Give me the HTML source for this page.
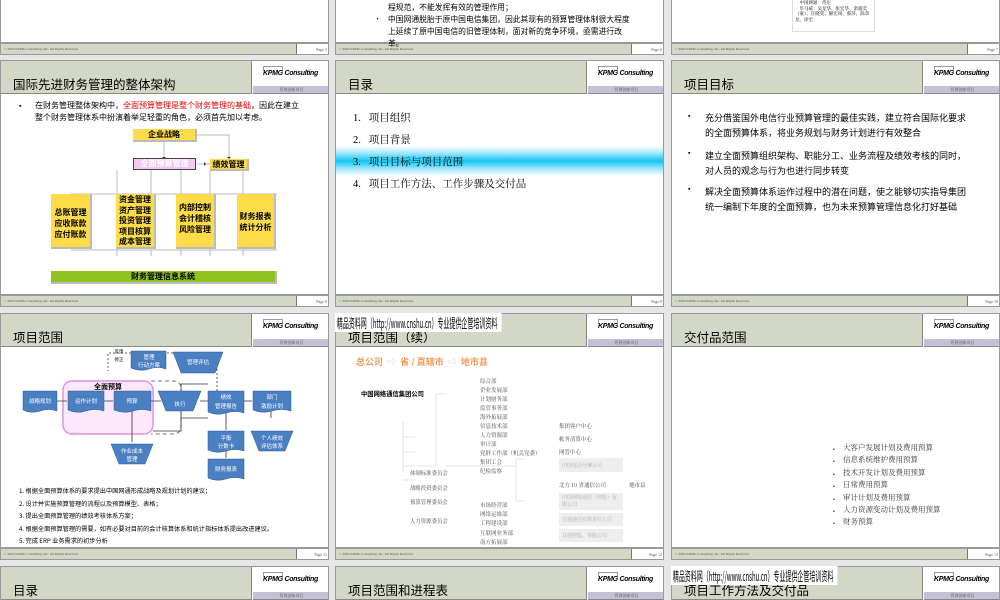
<!DOCTYPE html>
<html><head><meta charset="utf-8">
<style>
*{margin:0;padding:0;box-sizing:border-box}
html{width:1000px;height:600px;overflow:hidden}
body{width:1000px;height:600px;overflow:hidden;background:#e6e6e6;position:relative;font-family:"Liberation Sans","Noto Sans CJK SC",sans-serif;color:#000}
.a{position:absolute;white-space:nowrap}
.s{position:absolute;width:329px;height:247px;background:#fff;border:1px solid #999;overflow:hidden}
.r1{position:absolute;width:329px;height:55px;top:0;overflow:hidden}
.r1 .s{top:-192px;left:0}
.r4{position:absolute;width:329px;height:34px;top:566px;overflow:hidden}
.r4 .s{top:0;left:0;height:34px;border-bottom:none}
.hb{position:absolute;left:0;top:0;width:251px;height:33px;background:#d3d7c6;border-bottom:1px solid #888;border-right:1px solid #888}
.kp{position:absolute;left:252px;top:0;width:77px;height:25px;background:#fff}
.kp span{position:absolute;left:10px;top:9px;font:italic bold 7px "Liberation Sans",sans-serif;letter-spacing:-0.3px}
.kp i{position:absolute;left:10px;top:5px;width:20px;height:5px;border:1px solid #999;border-bottom:none}
.pu{position:absolute;left:252px;top:25px;width:77px;height:8px;background:#c4c1d6;border-bottom:1px solid #888;font:4px "Noto Serif CJK SC",serif;color:#555;text-align:center;line-height:8px}
.tt{position:absolute;left:12px;top:13px;font:12.5px "Noto Sans CJK SC",sans-serif}
.ft{position:absolute;left:0;top:233px;width:329px;height:13px;background:#d3d7c6;border-top:2px solid #999}
.ft span{position:absolute;left:3px;top:3px;font:3.5px "Liberation Serif",serif;color:#555}
.pg{position:absolute;right:0;top:0;width:34px;height:11px;background:#fff;border-left:1px solid #777;font:4px "Liberation Serif",serif;color:#555;text-align:right;padding:3px 3px 0 0}
.sr{font-family:"Liberation Serif","Noto Serif CJK SC",serif}
.yb{position:absolute;background:#fddb49;border-right:2px solid #bbb;border-bottom:2px solid #bbb;font:bold 8px "Noto Sans CJK SC",sans-serif;text-align:center}
.wm{position:absolute;background:#fff;font:13px "Noto Sans CJK SC",sans-serif;transform:scaleX(0.46);transform-origin:left top;white-space:nowrap;padding:0 4px;height:19px;line-height:19px;z-index:5;overflow:hidden}
.b9{position:absolute;left:33px;font:9px "Noto Sans CJK SC",sans-serif;white-space:nowrap}
.bl{position:absolute;left:16px;font:7px sans-serif}
</style></head><body>

<!-- ROW 1 (partial) -->
<div class="r1" style="left:0"><div class="s"><div class="ft"><span>© 2002 KPMG Consulting, Inc. All Rights Reserved</span><div class="pg">Page 5</div></div></div></div>
<div class="r1" style="left:335px"><div class="s">
<div class="a" style="left:52px;top:193px;font:7.8px 'Noto Sans CJK SC';">程规范，不能发挥有效的管理作用；</div>
<div class="a" style="left:38px;top:205px;font:7px 'Noto Sans CJK SC';">•</div>
<div class="a" style="left:52px;top:205px;font:7.8px 'Noto Sans CJK SC';">中国网通脱胎于原中国电信集团，因此其现有的预算管理体制很大程度</div>
<div class="a" style="left:52px;top:217px;font:7.8px 'Noto Sans CJK SC';">上延续了原中国电信的旧管理体制，面对新的竞争环境，亟需进行改</div>
<div class="a" style="left:52px;top:229px;font:7.8px 'Noto Sans CJK SC';z-index:2">革。</div>
<div class="ft"><span>© 2002 KPMG Consulting, Inc. All Rights Reserved</span><div class="pg">Page 6</div></div></div></div>
<div class="r1" style="left:671px"><div class="s">
<div class="a" style="left:120px;top:188px;width:83px;height:35px;border:1px solid #ddd;font:4.5px 'Noto Serif CJK SC';line-height:5.5px;padding:3px 2px;white-space:normal">•中国网通：待定<br>•毕马威：吴龙华、张宏华、余浦奕（豪）、汪晓雯、解宏岗、蔡萍、陈章龙、徐宏</div>
<div class="ft"><span>© 2002 KPMG Consulting, Inc. All Rights Reserved</span><div class="pg">Page 7</div></div></div></div>

<!-- ROW 2 -->
<div class="s" style="left:0;top:60px">
<div class="hb"></div><div class="tt">国际先进财务管理的整体架构</div>
<div class="kp"><i></i><span>KPMG Consulting</span></div><div class="pu">管理创新项目</div>
<div class="a" style="left:18px;top:42px;font:7px sans-serif">▪</div>
<div class="a" style="left:34px;top:39px;font:8px 'Noto Sans CJK SC';line-height:12px">在财务管理整体架构中，<span style="color:#e00">全面预算管理是整个财务管理的基础</span>，因此在建立<br>整个财务管理体系中扮演着举足轻重的角色，必须首先加以考虑。</div>
<svg class="a" style="left:0;top:0" width="329" height="233">
<g stroke="#bbb" fill="none" stroke-width="1">
<path d="M196 74H228V97M163 81V97M196 103H209M116 109V195M150 109V195M180 109V195M209 109V195M242 109V195M70 133H276M70 189H276"/>
</g>
<g fill="#333"><path d="M161 96h4l-2 2zM226 96h4l-2 2zM203 101v4l2-2z"/></g>
</svg>
<div class="yb" style="left:132px;top:68px;width:64px;height:13px;line-height:12px">企业战略</div>
<div class="a" style="left:132px;top:97px;width:63px;height:12px;background:#f3c8f3;border:1.5px solid #444;font:bold 8px 'Noto Sans CJK SC';color:#fff;text-align:center;line-height:9px">全面预算管理</div>
<div class="yb" style="left:209px;top:98px;width:39px;height:12px;line-height:11px">绩效管理</div>
<div class="yb" style="left:50px;top:133px;width:41px;height:55px;padding-top:13px;line-height:11px">总账管理<br>应收账款<br>应付账款</div>
<div class="yb" style="left:115px;top:133px;width:40px;height:55px;padding-top:1px;line-height:10.5px">资金管理<br>资产管理<br>投资管理<br>项目核算<br>成本管理</div>
<div class="yb" style="left:175px;top:133px;width:40px;height:55px;padding-top:8px;line-height:11px">内部控制<br>会计稽核<br>风险管理</div>
<div class="yb" style="left:236px;top:133px;width:39px;height:55px;padding-top:17px;line-height:11px">财务报表<br>统计分析</div>
<div class="a" style="left:50px;top:210px;width:226px;height:13px;background:#8fc31f;border-right:2px solid #bbb;border-bottom:2px solid #bbb;font:bold 8px 'Noto Sans CJK SC';text-align:center;line-height:12px">财务管理信息系统</div>
<div class="ft"><span>© 2002 KPMG Consulting, Inc. All Rights Reserved</span><div class="pg">Page 8</div></div></div>

<div class="s" style="left:335px;top:60px">
<div class="hb"></div><div class="tt">目录</div>
<div class="kp"><i></i><span>KPMG Consulting</span></div><div class="pu">管理创新项目</div>
<div class="a" style="left:0;top:85px;width:329px;height:30px;background:linear-gradient(#fff,#9ae6fa 25%,#12c6f2 50%,#9ae6fa 75%,#fff)"></div>
<div class="a sr" style="left:17px;top:47px;font-size:10.5px;line-height:22px">1.&nbsp;&nbsp; 项目组织<br>2.&nbsp;&nbsp; 项目背景<br>3.&nbsp;&nbsp; 项目目标与项目范围<br>4.&nbsp;&nbsp; 项目工作方法、工作步骤及交付品</div>
<div class="ft"><span>© 2002 KPMG Consulting, Inc. All Rights Reserved</span><div class="pg">Page 9</div></div></div>

<div class="s" style="left:671px;top:60px">
<div class="hb"></div><div class="tt">项目目标</div>
<div class="kp"><i></i><span>KPMG Consulting</span></div><div class="pu">管理创新项目</div>
<div class="bl" style="top:52px">▪</div><div class="bl" style="top:89px">▪</div><div class="bl" style="top:125px">▪</div>
<div class="b9" style="top:50px">充分借鉴国外电信行业预算管理的最佳实践，建立符合国际化要求</div>
<div class="b9" style="top:65px">的全面预算体系，将业务规划与财务计划进行有效整合</div>
<div class="b9" style="top:88px">建立全面预算组织架构、职能分工、业务流程及绩效考核的同时，</div>
<div class="b9" style="top:103px">对人员的观念与行为也进行同步转变</div>
<div class="b9" style="top:124px">解决全面预算体系运作过程中的潜在问题，使之能够切实指导集团</div>
<div class="b9" style="top:139px">统一编制下年度的全面预算，也为未来预算管理信息化打好基础</div>
<div class="ft"><span>© 2002 KPMG Consulting, Inc. All Rights Reserved</span><div class="pg">Page 10</div></div></div>

<!-- ROW 3 -->
<div class="s" style="left:0;top:313px">
<div class="hb"></div><div class="tt">项目范围</div>
<div class="kp"><i></i><span>KPMG Consulting</span></div><div class="pu">管理创新项目</div>
<svg class="a" style="left:0;top:0" width="329" height="233" font-family="Noto Sans CJK SC" font-size="5.5" text-anchor="middle">
<rect x="62" y="67" width="90" height="53" rx="9" fill="#fde8fb" stroke="#e48fe4" stroke-width="1.5"/>
<path d="M150 67H172q8 0 8 8v37q0 8-8 8H150" fill="none" stroke="#8a6a8a" stroke-dasharray="4 3"/>
<g stroke="#333" fill="none" stroke-width="0.8">
<path d="M55 87H66M103 87H112M150 87H160M199 87H207M243 87H251M270 97V104M131 97V128M152 117H180V70H207M180 104H207M225 95V116M225 122V144" />
<path d="M130 39H107V57M172 39H166M216 39V86" stroke-dasharray="2 2"/>
</g>
<g fill="#4a7fc1" stroke="#2d5a9a" stroke-width="0.5">
<path d="M22 77h34v20q-8-3-17 0t-17-1z"/>
<path d="M67 77h36v20q-9-3-18 0t-18-1z"/>
<path d="M113 77h37v20q-9-3-18 0t-19-1z"/>
<path d="M157 77h43l-8 20h-27z"/>
<path d="M207 77h36v22q-9-3-18 0t-18-1z"/>
<path d="M252 77h38v20q-9-3-19 0t-19-1z"/>
<path d="M130 37h35v18q-9-3-17 0t-18-1z"/>
<path d="M172 38h50l-8 21h-34z"/>
<path d="M110 130h42l-8 20h-26z"/>
<path d="M207 117h36v20q-9-3-18 0t-18-1z"/>
<path d="M207 145h36v20q-9-3-18 0t-18-1z"/>
<path d="M250 117h42l-8 20h-26z"/>
</g>
<g fill="#fff">
<text x="39" y="89">战略规划</text><text x="85" y="89">运作计划</text><text x="131" y="89">预算</text><text x="179" y="92">执行</text>
<text x="225" y="85">绩效</text><text x="225" y="94">管理报告</text><text x="271" y="85">部门</text><text x="271" y="94">激励计划</text>
<text x="148" y="45">管理</text><text x="148" y="53">行动方案</text><text x="197" y="50">管理评估</text>
<text x="131" y="139">作业成本</text><text x="131" y="147">管理</text>
<text x="225" y="126">平衡</text><text x="225" y="134">分数卡</text><text x="225" y="157">财务报表</text>
<text x="271" y="126">个人绩效</text><text x="271" y="134">评估体系</text>
</g>
<text x="107" y="75" font-size="7" font-weight="bold">全面预算</text>
<text x="118" y="39" font-size="4.5">反馈</text><text x="118" y="47" font-size="4.5">修正</text>
</svg>
<div class="a" style="left:18px;top:171px;font:6.2px 'Noto Sans CJK SC';line-height:12.6px">1. 根据全面预算体系的要求提出中国网通形成战略及规划计划的建议；<br>2. 设计并实施预算管理的流程以及预算模型、表格；<br>3. 提出全面预算管理的绩效考核体系方案；<br>4. 根据全面预算管理的需要，如有必要对目前的会计核算体系和统计指标体系提出改进建议。<br>5. 完成 ERP 业务需求的初步分析</div>
<div class="ft"><span>© 2002 KPMG Consulting, Inc. All Rights Reserved</span><div class="pg">Page 11</div></div></div>

<div class="s" style="left:335px;top:313px">
<div class="hb"></div><div class="tt">项目范围（续）</div>
<div class="kp"><i></i><span>KPMG Consulting</span></div><div class="pu">管理创新项目</div>
<div class="a" style="left:20px;top:41px;font:bold 9px 'Noto Sans CJK SC';color:#f39a5a;word-spacing:0">总公司 <span style="color:#ddd">&nbsp;⇨&nbsp;</span> 省 / 直辖市 <span style="color:#ddd">&nbsp;⇨&nbsp;</span> 地市县</div>
<svg class="a" style="left:0;top:0" width="329" height="233"><g stroke="#ddd" fill="none" stroke-width="0.8">
<path d="M67 108V158M67 123H80M67 138H80M67 152H80M67 166H80M80 152H100V80H110M100 188H110M110 152H180M180 145V187M180 145H190M180 187H190M262 157H286"/></g></svg>
<div class="a" style="left:25px;top:75px;font:bold 6.3px 'Noto Sans CJK SC'">中国网络通信集团公司</div>
<div class="a" style="left:144px;top:63px;font:5.5px 'Noto Serif CJK SC';line-height:9px;color:#444">综合部<br>企业发展部<br>计划财务部<br>监管事务部<br>海外拓展部<br>信息技术部<br>人力资源部<br>审计部<br>党群工作部（机关党委）<br>集团工会<br>纪检监察</div>
<div class="a" style="left:144px;top:187px;font:5.5px 'Noto Serif CJK SC';line-height:9.2px;color:#444">市场经营部<br>网络运维部<br>工程建设部<br>互联网业务部<br>南方拓展部</div>
<div class="a" style="left:74px;top:152px;font:5.4px 'Noto Serif CJK SC';line-height:14.5px;color:#444">体制标准委员会<br>战略投资委员会<br>预算管理委员会<br><span style="line-height:22px">人力资源委员会</span></div>
<div class="a" style="left:223px;top:106px;font:5.5px 'Noto Serif CJK SC';line-height:13px;color:#444">集团客户中心<br>帐务清算中心<br>网管中心</div>
<div class="a" style="left:223px;top:144px;width:64px;height:14px;background:#eee;font:5px 'Noto Serif CJK SC';color:#aaa;padding:4px 3px">中国电话号簿公司</div>
<div class="a" style="left:223px;top:167px;font:5.5px 'Noto Serif CJK SC';color:#444">北方 10 省通信公司</div>
<div class="a" style="left:293px;top:167px;font:5.5px 'Noto Serif CJK SC';color:#444">地市县</div>
<div class="a" style="left:223px;top:179px;width:64px;height:17px;background:#eee;font:5px 'Noto Serif CJK SC';color:#aaa;padding:2px 3px;line-height:6.5px;white-space:normal">中国网络通信（控股）有限公司</div>
<div class="a" style="left:223px;top:199px;width:64px;height:13px;background:#eee;font:5px 'Noto Serif CJK SC';color:#aaa;padding:3px 3px">吉通通信有限责任公司</div>
<div class="a" style="left:223px;top:215px;width:64px;height:13px;background:#eee;font:5px 'Noto Serif CJK SC';color:#aaa;padding:3px 3px">其他控股、参股公司</div>
<div class="ft"><span>© 2002 KPMG Consulting, Inc. All Rights Reserved</span><div class="pg">Page 12</div></div></div>
<div class="wm" style="left:335px;top:313px;width:362px">精品资料网（http://www.cnshu.cn）专业提供企管培训资料</div>

<div class="s" style="left:671px;top:313px">
<div class="hb"></div><div class="tt">交付品范围</div>
<div class="kp"><i></i><span>KPMG Consulting</span></div><div class="pu">管理创新项目</div>
<div class="a" style="left:161px;top:130px;font:5px sans-serif;line-height:12.4px">•<br>•<br>•<br>•<br>•<br>•<br>•</div>
<div class="a" style="left:171px;top:128px;font:7.5px 'Noto Serif CJK SC';line-height:12.4px;color:#333">大客户发展计划及费用预算<br>信息系统维护费用预算<br>技术开发计划及费用预算<br>日常费用预算<br>审计计划及费用预算<br>人力资源变动计划及费用预算<br>财务预算</div>
<div class="ft"><span>© 2002 KPMG Consulting, Inc. All Rights Reserved</span><div class="pg">Page 13</div></div></div>

<!-- ROW 4 -->
<div class="r4" style="left:0"><div class="s"><div class="hb"></div><div class="tt">目录</div><div class="kp"><i></i><span>KPMG Consulting</span></div><div class="pu">管理创新项目</div></div></div>
<div class="r4" style="left:335px"><div class="s"><div class="hb"></div><div class="tt">项目范围和进程表</div><div class="kp"><i></i><span>KPMG Consulting</span></div><div class="pu">管理创新项目</div></div></div>
<div class="r4" style="left:671px"><div class="s"><div class="hb"></div><div class="tt">项目工作方法及交付品</div><div class="kp"><i></i><span>KPMG Consulting</span></div><div class="pu">管理创新项目</div></div></div>
<div class="wm" style="left:671px;top:566px;width:362px">精品资料网（http://www.cnshu.cn）专业提供企管培训资料</div>
</body></html>
